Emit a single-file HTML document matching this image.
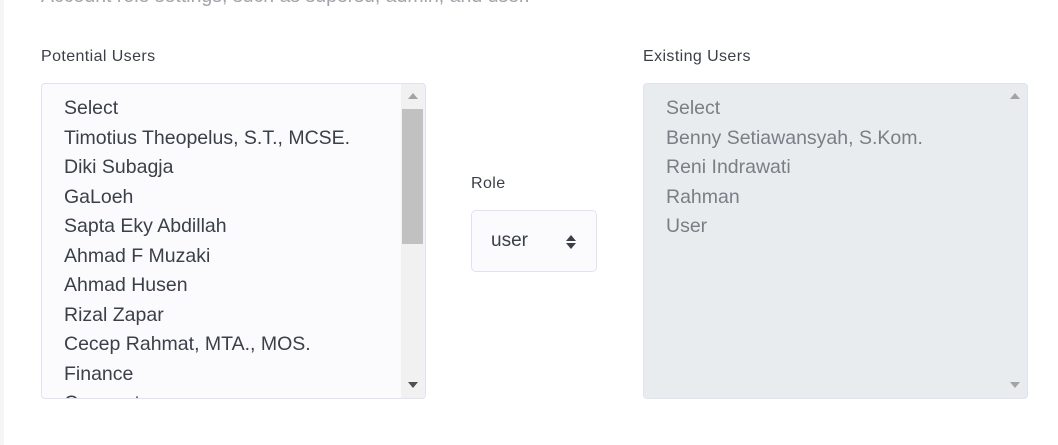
<!DOCTYPE html>
<html><head><style>
body{margin:0;width:1058px;height:445px;background:#fff;position:relative;overflow:hidden;font-family:"Liberation Sans",sans-serif;}
.strip{position:absolute;left:0;top:0;width:4px;height:445px;background:#f4f5f7}
.top{position:absolute;left:41px;top:-15px;font-size:19.5px;color:#a0a4ab;white-space:nowrap}
.lbl{position:absolute;font-size:16px;color:#3a3f48;letter-spacing:.4px}
.box{position:absolute;top:83px;width:383px;height:314px;border:1px solid #dfe1f5;border-radius:4px;overflow:hidden}
.items{position:absolute;left:22px;top:10px;font-size:19.5px;line-height:29.5px;white-space:nowrap}
.sb{position:absolute;right:0;top:0;width:24px;height:100%;background:#f1f1f1}
.up,.dn{position:absolute;left:7px;width:0;height:0;border-left:5px solid transparent;border-right:5px solid transparent}
</style></head><body>
<div class="strip"></div>
<div class="top">Account role settings, such as supersu, admin, and user.</div>
<div class="lbl" style="left:41px;top:48px">Potential Users</div>
<div class="lbl" style="left:643px;top:48px">Existing Users</div>
<div class="lbl" style="left:471px;top:175px">Role</div>
<div class="box" style="left:41px;background:#fbfbfe">
<div class="items" style="color:#3a3f48">Select<br>Timotius Theopelus, S.T., MCSE.<br>Diki Subagja<br>GaLoeh<br>Sapta Eky Abdillah<br>Ahmad F Muzaki<br>Ahmad Husen<br>Rizal Zapar<br>Cecep Rahmat, MTA., MOS.<br>Finance<br>Corporate</div>
<div class="sb"><div class="up" style="top:9px;border-bottom:6px solid #a3a3a3"></div>
<div style="position:absolute;left:1px;top:25px;width:21px;height:135px;background:#c1c1c1"></div>
<div class="dn" style="bottom:10px;border-top:6px solid #505050"></div></div>
</div>
<div style="position:absolute;left:471px;top:210px;width:124px;height:60px;border:1.5px solid #dfe1f5;border-radius:5px;background:#fbfbfe">
<div style="position:absolute;left:19px;top:19px;font-size:19px;color:#3a3f48">user</div>
<div style="position:absolute;left:94px;top:24px;border-left:5px solid transparent;border-right:5px solid transparent;border-bottom:6px solid #3a3f48"></div>
<div style="position:absolute;left:94px;top:32px;border-left:5px solid transparent;border-right:5px solid transparent;border-top:6px solid #3a3f48"></div>
</div>
<div class="box" style="left:643px;background:#e9ecef">
<div class="items" style="color:#7a7e85">Select<br>Benny Setiawansyah, S.Kom.<br>Reni Indrawati<br>Rahman<br>User</div>
<div class="sb" style="background:#e9ecef"><div class="up" style="top:9px;border-bottom:6px solid #a3a3a3"></div>
<div class="dn" style="bottom:10px;border-top:6px solid #a3a3a3"></div></div>
</div>
</body></html>
